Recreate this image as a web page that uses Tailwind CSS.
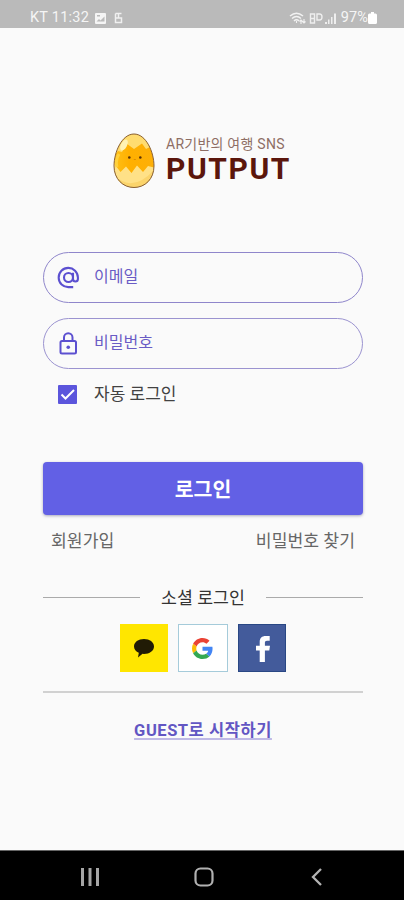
<!DOCTYPE html>
<html lang="ko">
<head>
<meta charset="utf-8">
<meta name="viewport" content="width=device-width, initial-scale=1">
<title>PUTPUT</title>
<script src="https://cdn.jsdelivr.net/npm/@tailwindcss/browser@4"></script>
</head>
<body class="bg-[#fafafa] font-[Roboto,'Noto_Sans_CJK_KR',sans-serif]">
<div class="w-[404px] h-[900px] flex flex-col overflow-hidden bg-[#fafafa]">
  <header class="h-7 shrink-0 bg-[#bababa] text-[#f5f5f5] text-[14.5px] flex items-center pl-[30px] pr-[27px] pt-[8px]">
    <span class="leading-5 whitespace-nowrap w-[65px] tracking-[0.25px]">KT 11:32</span>
    <svg class="w-[11px] h-[11px]" viewBox="0 0 11 11"><rect width="11" height="11" rx="1" fill="#f5f5f5"/><path d="M1.500 8.500 4 6 5.500 7.500 9.500 3.500V8.500ZM2 2h3v1.500H2z" fill="#bababa"/></svg>
    <svg class="ml-2 w-[9px] h-3" viewBox="0 0 9 12" fill="none" stroke="#f0f0f0" stroke-width="1.500"><path d="M1.500 1.500h6M1.500 1.500v9h6v-4.500h-6M4.500 1.500v4.500"/></svg>
    <svg class="ml-auto w-[17px] h-[13px]" viewBox="0 0 17 13" fill="none" stroke="#f2f2f2" stroke-width="1.500"><path d="M1 4Q7.500-1.500 14 4M3 6.500Q7.500 2.500 12 6.500M5 9Q7.500 6.500 10 9"/><path d="M7.500 9v2M12 12V8m-1.500 1.500L12 8l1.500 1.500M15 7v4m-1.500-1.500L15 11l1.500-1.500" stroke-width="1.100"/></svg>
    <svg class="ml-[3px] w-[28px] h-3" viewBox="0 0 28 12"><g fill="none" stroke="#eee" stroke-width="1.400"><path d="M1.500 2h4v9h-4zM1.500 6.500h4M8 2h2.500q2.500 0 2.500 3t-2.500 3H8z"/></g><path d="M16 10h2v2h-2zM19 7.500h1.500V12H19zM22 5h1.500v7H22zM25 1.500h2V12h-2z" fill="#eee"/></svg>
    <span class="leading-5 ml-[4px] tracking-[0.1px]">97%</span>
    <svg class="w-[9px] h-3" viewBox="0 0 9 12"><path d="M3 0h3v1.500h1.500Q9 1.500 9 3v7.500Q9 12 7.500 12h-6Q0 12 0 10.500V3q0-1.500 1.500-1.500H3z" fill="#fff"/></svg>
  </header>

  <main class="flex-1 flex flex-col pl-[43px] pr-[41px]">
    <div class="flex mt-[104px] ml-[69px] h-[58px]">
      <svg class="w-[44px] h-[58px] shrink-0" viewBox="0 0 44 58">
        <defs>
          <clipPath id="egg"><path d="M22 2C34 2 42 20 42 34c0 13-9 21.500-20 21.500S2 47 2 34C2 20 10 2 22 2z"/></clipPath>
          <linearGradient id="yolk" x1="0" y1="0" x2="1" y2="0"><stop offset="0" stop-color="#ffc21a"/><stop offset="0.400" stop-color="#ffb000"/><stop offset="1" stop-color="#fdaf08"/></linearGradient>
        </defs>
        <g clip-path="url(#egg)">
          <path d="M0 0h44v58H0z" fill="url(#yolk)"/>
          <path d="M0 26 6 19 10 20 14.500 11.500 22 17 30 11.500 34 17 38 15 44 22V0H0z" fill="#ffdc70"/>
          <path d="M0 29 8.500 40 14 34.500 19.500 41 25 33.500 31 40 36 34 44 36V58H0z" fill="#ffe187"/>
          <path d="M3 44Q21 61 42 38L37 56H5z" fill="#f7c850" opacity="0.500"/>
          <ellipse cx="12" cy="13" rx="3" ry="6" transform="rotate(28 12 13)" fill="#fff2b4"/>
          <path d="M7 22Q3 28 5 35" stroke="#ffd13c" stroke-width="3" fill="none"/>
        </g>
        <path d="M22 2C34 2 42 20 42 34c0 13-9 21.500-20 21.500S2 47 2 34C2 20 10 2 22 2z" fill="none" stroke="#876038" stroke-width="1"/>
        <g fill="#583108"><circle cx="17.300" cy="25.500" r="1.300"/><circle cx="28.300" cy="25.500" r="1.300"/></g><path d="M21.800 27.500h2" stroke="#df8d00"/>
      </svg>
      <div class="ml-[10px] flex flex-col whitespace-nowrap">
        <span class="text-[14px] leading-5 mt-[2px] text-[#8e6e64] tracking-[0.25px]">AR기반의 여행 SNS</span>
        <span class="text-[30px] leading-8 -mt-px font-bold text-[#5b160c] tracking-[1.6px]">PUTPUT</span>
      </div>
    </div>

    <div class="mt-[62px] h-[51px] border border-[#8f86cb] rounded-full flex items-center pl-[13px] text-[#6a5cc5]">
      <svg class="w-[23px] h-[23px]" viewBox="0 0 22 22" fill="none" stroke="#5c50d0" stroke-width="2" ><circle cx="11" cy="11" r="4.300"/><path d="M15.300 6.500V12.500a2.350 2.350 0 0 0 4.700 0V11A9.200 9.200 0 1 0 11 20.200h4.500"/></svg>
      <span class="ml-[14px] text-[16px] leading-6 -mt-[2px]">이메일</span>
    </div>
    <div class="mt-[15px] h-[51px] border border-[#9b93d0] rounded-full flex items-center pl-[13px] text-[#6a5cc5]">
      <svg class="w-[22px] h-[24px]" viewBox="0 0 22 24" fill="none" stroke="#5c50d0" stroke-width="2"><rect x="3.500" y="9" width="15.500" height="12.500" rx="1.500"/><path d="M7 9V5.500a4.250 4.250 0 0 1 8.500 0v3.500"/><circle cx="11.250" cy="15.300" r="1.800" fill="#5c50d0" stroke="none"/></svg>
      <span class="ml-[15px] text-[16px] leading-6 -mt-[2px]">비밀번호</span>
    </div>
    <div class="mt-[13px] h-6 flex items-center pl-[15px]">
      <svg class="w-[19px] h-[19px]" viewBox="0 0 19 19"><rect width="19" height="19" rx="1" fill="#5b55dc"/><path d="m3.500 9.500 4 4 8.500-8.500" fill="none" stroke="#fff" stroke-width="2"/></svg>
      <span class="ml-[17px] text-[17px] leading-6 text-[#424242]">자동 로그인</span>
    </div>

    <button class="mt-[56px] h-[53px] shrink-0 rounded-[4px] bg-[#6260e5] text-white text-[20.5px] font-bold leading-6 pt-[2px] shadow-[0_1px_3px_rgba(70,70,110,0.45)]">로그인</button>
    <div class="mt-[14px] h-6 flex justify-between px-[8px] text-[17.2px] leading-6 text-[#666]">
      <span>회원가입</span><span>비밀번호 찾기</span>
    </div>

    <div class="mt-[32px] h-6 flex items-center text-[17.3px] leading-6 text-[#333]">
      <i class="h-px w-[97px] bg-[#aaa]"></i>
      <span class="flex-1 text-center pt-px">소셜 로그인</span>
      <i class="h-px w-[97px] bg-[#aaa]"></i>
    </div>
    <div class="mt-[15px] flex justify-center gap-[10px]">
      <div class="w-[48px] h-12 bg-[#ffe600] flex items-center justify-center">
        <svg class="w-[20px] h-[20px]" viewBox="0 0 20 20"><path d="M10 1c5.600 0 10 3.200 10 7.400s-4.400 7.500-10 7.500l-1.500-.1L4 19.500l.8-4.700C2 13.500 0 11.200 0 8.400 0 4.200 4.400 1 10 1z" fill="#211b05"/></svg>
      </div>
      <div class="w-[50px] h-12 bg-white border border-[#a5cbda] flex items-center justify-center">
        <svg class="w-[21px] h-[21px] mr-px" viewBox="0 0 48 48"><path fill="#EA4335" d="M24 9.500c3.540 0 6.710 1.220 9.210 3.600l6.850-6.850C35.900 2.380 30.470 0 24 0 14.620 0 6.510 5.380 2.560 13.220l7.980 6.190C12.430 13.720 17.740 9.500 24 9.500z"/><path fill="#4285F4" d="M46.980 24.550c0-1.570-.15-3.090-.38-4.550H24v9.020h12.940c-.58 2.960-2.260 5.480-4.780 7.180l7.730 6c4.510-4.180 7.090-10.360 7.090-17.650z"/><path fill="#FBBC05" d="M10.530 28.590c-.48-1.450-.76-2.990-.76-4.590s.27-3.140.76-4.590l-7.980-6.190C.92 16.460 0 20.120 0 24s.92 7.540 2.560 10.780l7.970-6.190z"/><path fill="#34A853" d="M24 48c6.480 0 11.930-2.130 15.890-5.810l-7.730-6c-2.150 1.450-4.920 2.300-8.160 2.300-6.260 0-11.570-4.220-13.470-9.910l-7.980 6.190C6.510 42.620 14.620 48 24 48z"/></svg>
      </div>
      <div class="w-12 h-12 bg-[#435b9b] border border-[#294784] flex items-center justify-center">
        <svg class="w-4 h-[28px] mt-[2px] ml-[2px]" viewBox="0 0 16 28"><path d="M4.700 27V15.500H1v-4.800h3.700V7c0-4 2.200-6 6-6h4v4.800h-2.700c-1.500 0-2.100.7-2.100 2v2.900H15l-.7 4.800H9.900V27z" fill="#fff"/></svg>
      </div>
    </div>
    <div class="mt-[19px] h-[2px] shrink-0 bg-[#d1d1d1]"></div>
    <a class="mt-[26px] self-center text-[16.5px] tracking-[0.55px] leading-6 font-bold text-[#6256c3] whitespace-nowrap underline decoration-[#bfb9e6] decoration-2 underline-offset-[2px]">GUEST로 시작하기</a>
  </main>

  <nav class="h-[50px] shrink-0 bg-black border-t border-[#666] flex items-center pt-[2px] pl-[81px] pr-[82px] justify-between">
    <svg class="w-[18px] h-[18px]" viewBox="0 0 18 18" fill="#a6a6a6"><path d="M0 0h3v18H0zM7.500 0h3v18h-3zM15 0h3v18h-3z"/></svg>
    <svg class="w-5 h-5 mr-[3px]" viewBox="0 0 20 20"><rect x="1.500" y="1.500" width="17" height="17" rx="5" fill="none" stroke="#b1b1b1" stroke-width="2.200"/></svg>
    <svg class="w-[11px] h-[18px]" viewBox="0 0 11 18"><path d="M10 1 2 9l8 8" fill="none" stroke="#b4b4b4" stroke-width="2.300"/></svg>
  </nav>
</div>
</body>
</html>
